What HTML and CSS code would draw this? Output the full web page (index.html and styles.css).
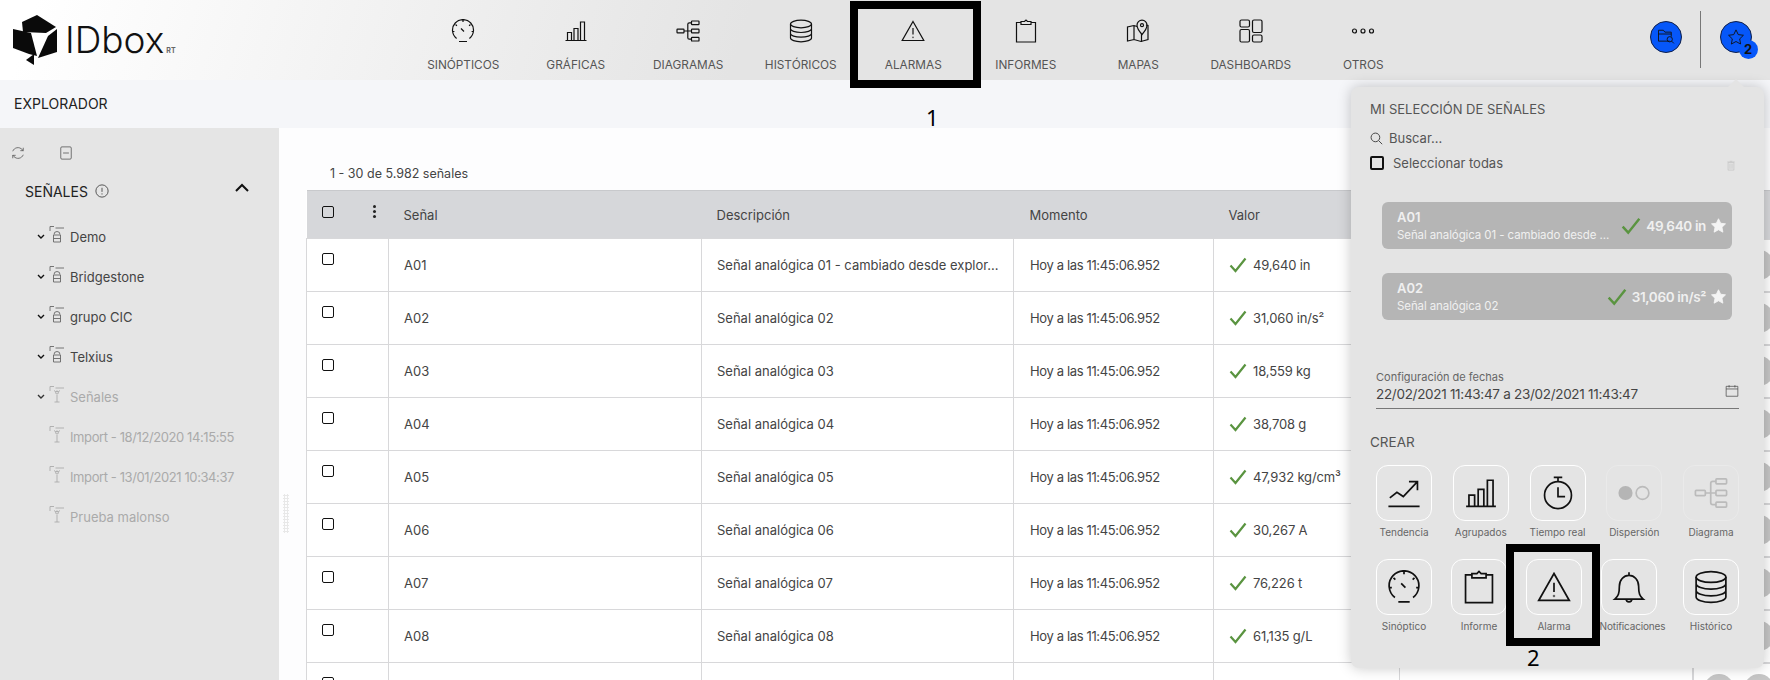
FILE: index.html
```html
<!DOCTYPE html>
<html lang="es">
<head>
    <meta charset="UTF-8">
    <title>IDbox RT - Explorador</title>
    <link rel="stylesheet" href="styles.css">
</head>
<body>

    <svg class="sprites" xmlns="http://www.w3.org/2000/svg">
        <symbol id="i-gauge" viewBox="0 0 24 24">
            <path d="M5.6 19.4A10.5 10.5 0 1 1 18.4 19.4M1.6 12.5h1.8M4.6 5.5l1.3 1.3M12 1.2V3M19.4 5.5l-1.3 1.3M22.4 12.5h-1.8M10 9.5l3 3M8 22.5h8"/>
        </symbol>
        <symbol id="i-bars" viewBox="0 0 24 24">
            <path d="M1.5 21.5h21M3.5 21v-7.500h4V21M10 21V9.500h4V21M16.500 21V3h4v18"/>
        </symbol>
        <symbol id="i-tree" viewBox="0 0 24 24">
            <rect x="1" y="10.200" width="7" height="3.600" rx=".6"/>
            <rect x="15.500" y="2" width="7.500" height="3.600" rx=".6"/>
            <rect x="15.500" y="10.200" width="7.500" height="3.600" rx=".6"/>
            <rect x="15.500" y="18.400" width="7.500" height="3.600" rx=".6"/>
            <path d="M8 12h7.500M15.500 3.800h-2.200a1.500 1.500 0 0 0-1.500 1.500v13.400a1.500 1.500 0 0 0 1.500 1.500h2.200"/>
        </symbol>
        <symbol id="i-db" viewBox="0 0 24 24">
            <ellipse cx="12" cy="5" rx="10.500" ry="3.800"/>
            <path d="M1.500 5v14c0 2.100 4.700 3.800 10.500 3.800s10.500-1.700 10.500-3.800V5M1.500 9.700c0 2.100 4.700 3.800 10.500 3.800s10.500-1.700 10.500-3.800M1.500 14.400c0 2.100 4.700 3.800 10.500 3.800s10.500-1.700 10.500-3.800"/>
        </symbol>
        <symbol id="i-alert" viewBox="0 0 24 24">
            <path d="M12 2.500L22.800 21.500H1.200zM12 9v6.500"/>
            <circle class="dot" cx="12" cy="18.300" r=".9"/>
        </symbol>
        <symbol id="i-clip" viewBox="0 0 24 24">
            <path d="M7 3.500H2.500V23h19V3.500H17M7 5.500V2.500h3.500l1.500-1.500 1.500 1.500H17v3z"/>
        </symbol>
        <symbol id="i-map" viewBox="0 0 24 24">
            <path d="M8 6.500L1.500 8v14l6.500-1.500 7 2 7-2V6.500l-2-.5M8 6.500v14M15.500 15v8M8 6.500l3 1"/>
            <path d="M16 1.200a5 5 0 0 0-5 5c0 3.500 5 9.300 5 9.300s5-5.800 5-9.300a5 5 0 0 0-5-5z"/>
            <circle cx="16" cy="6.200" r="1.500"/>
        </symbol>
        <symbol id="i-dash" viewBox="0 0 24 24">
            <rect x="1" y="1" width="9.500" height="7" rx="1.500"/>
            <rect x="1" y="10.500" width="9.500" height="12.500" rx="1.500"/>
            <rect x="13.500" y="1" width="9.500" height="12.500" rx="1.500"/>
            <rect x="13.500" y="16" width="9.500" height="7" rx="1.500"/>
        </symbol>
        <symbol id="i-dots" viewBox="0 0 24 24">
            <circle cx="3.500" cy="12" r="2"/>
            <circle cx="12" cy="12" r="2"/>
            <circle cx="20.500" cy="12" r="2"/>
        </symbol>
        <symbol id="i-trend" viewBox="0 0 24 24">
            <path d="M2 15.500l5-4 4.500 3L21 4.500M15.500 4H21.500v6M1 21.500h22"/>
        </symbol>
        <symbol id="i-timer" viewBox="0 0 24 24">
            <circle cx="12" cy="13.500" r="9.500"/>
            <path d="M9 1h6M12 1v3M12 8v6.500h5"/>
        </symbol>
        <symbol id="i-scatter" viewBox="0 0 24 24">
            <circle class="dot" cx="6" cy="12" r="5"/>
            <circle cx="18" cy="12" r="4.500"/>
        </symbol>
        <symbol id="i-bell" viewBox="0 0 24 24">
            <path d="M2 20.500c2.500-2 3.200-4 3.200-9 0-4.500 3-7.700 6.800-7.700s6.800 3.200 6.800 7.700c0 5 .7 7 3.200 9zM12 1.500v2.300M10 20.500a2 2 0 0 0 4 0"/>
        </symbol>
        <symbol id="i-star" viewBox="0 0 24 24">
            <path d="M12 2.500l3 6.300 6.900.9-5 4.800 1.300 6.900-6.200-3.400-6.200 3.400 1.300-6.900-5-4.800 6.900-.9z" stroke-linejoin="round"/>
        </symbol>
        <symbol id="i-folder" viewBox="0 0 24 24">
            <path d="M17 17.500H2V3h6.500l2 2.500H19v6M2 8h17"/>
            <circle cx="17" cy="15" r="3.500"/>
            <path d="M19.500 17.500l3 3"/>
        </symbol>
        <symbol id="i-search" viewBox="0 0 24 24">
            <circle cx="10" cy="10" r="8"/>
            <path d="M16 16l6.500 6.500"/>
        </symbol>
        <symbol id="i-trash" viewBox="0 0 24 24">
            <path d="M5 5h14v18H5zM3 3.500h18M9 2h6M9.500 8v12M14.500 8v12"/>
        </symbol>
        <symbol id="i-cal" viewBox="0 0 24 24">
            <path d="M2 4h20v17H2zM2 8.500h20M7 2v4M17 2v4"/>
        </symbol>
        <symbol id="i-refresh" viewBox="0 0 24 24">
            <path d="M3 9a9.500 9.500 0 0 1 16-3l2 2M21 15a9.500 9.500 0 0 1-16 3l-2-2M21 3v5h-5M3 21v-5h5"/>
        </symbol>
        <symbol id="i-minusbox" viewBox="0 0 24 24">
            <rect x="3" y="1.500" width="18" height="21" rx="2"/>
            <path d="M7 12h10"/>
        </symbol>
        <symbol id="i-info" viewBox="0 0 24 24">
            <circle cx="12" cy="12" r="10.500"/>
            <path d="M12 6.500v7M12 16v2"/>
        </symbol>
        <symbol id="i-group" viewBox="0 0 16 18">
            <path d="M1 6V1.500h4M6.500 3H15M5 9.500a3 3 0 0 1 6 0M4.500 10h7v7h-7zM4.500 13.500h7"/>
        </symbol>
        <symbol id="i-signal" viewBox="0 0 16 18">
            <path d="M1 6V1.500h4M6.500 3H15M8 10v7M5.500 17h5M5 5.500a4 4 0 0 0 6 0"/>
            <circle cx="8" cy="7.500" r="1.500"/>
        </symbol>
    </svg>

    <header class="topbar">
        <a class="logo">
            <svg class="logo-mark" viewBox="13 15 44 50">
                <path d="M37 15l19 12-10 6-23-1-1-10z"/>
                <path d="M57 29v23l-19 6 10-22z"/>
                <path d="M13 29l18 4 6 23-8-2-16-6z"/>
                <path d="M34 54v11l-8-5z"/>
            </svg>
            <span class="logo-text">IDbox</span><span class="logo-rt">RT</span>
        </a>
        <nav class="mainnav">
            <a class="nav-item"><svg class="ic"><use href="#i-gauge"/></svg>SINÓPTICOS</a>
            <a class="nav-item"><svg class="ic"><use href="#i-bars"/></svg>GRÁFICAS</a>
            <a class="nav-item"><svg class="ic"><use href="#i-tree"/></svg>DIAGRAMAS</a>
            <a class="nav-item"><svg class="ic"><use href="#i-db"/></svg>HISTÓRICOS</a>
            <a class="nav-item"><svg class="ic"><use href="#i-alert"/></svg>ALARMAS</a>
            <a class="nav-item"><svg class="ic"><use href="#i-clip"/></svg>INFORMES</a>
            <a class="nav-item"><svg class="ic"><use href="#i-map"/></svg>MAPAS</a>
            <a class="nav-item"><svg class="ic"><use href="#i-dash"/></svg>DASHBOARDS</a>
            <a class="nav-item"><svg class="ic"><use href="#i-dots"/></svg>OTROS</a>
        </nav>
        <div class="top-actions">
            <a class="round-btn"><svg class="ic-sm"><use href="#i-folder"/></svg></a>
            <span class="top-divider"></span>
            <a class="round-btn">
                <svg class="ic-sm"><use href="#i-star"/></svg>
                <span class="badge">2</span>
            </a>
        </div>
    </header>

    <div class="titlebar">EXPLORADOR</div>

    <div class="content">
        <aside class="sidebar">
            <div class="side-tools">
                <svg class="tool"><use href="#i-refresh"/></svg>
                <svg class="tool"><use href="#i-minusbox"/></svg>
            </div>
            <div class="side-head">
                <span>SEÑALES</span>
                <svg class="info"><use href="#i-info"/></svg>
                <svg class="chev-up" viewBox="0 0 14 9"><path d="M1 8l6-6 6 6"/></svg>
            </div>
            <ul class="tree">
                <li><svg class="arrow" viewBox="0 0 8 6"><path d="M1 1l3 3 3-3"/></svg><svg class="node"><use href="#i-group"/></svg>Demo</li>
                <li><svg class="arrow" viewBox="0 0 8 6"><path d="M1 1l3 3 3-3"/></svg><svg class="node"><use href="#i-group"/></svg>Bridgestone</li>
                <li><svg class="arrow" viewBox="0 0 8 6"><path d="M1 1l3 3 3-3"/></svg><svg class="node"><use href="#i-group"/></svg>grupo CIC</li>
                <li><svg class="arrow" viewBox="0 0 8 6"><path d="M1 1l3 3 3-3"/></svg><svg class="node"><use href="#i-group"/></svg>Telxius</li>
                <li class="off"><svg class="arrow" viewBox="0 0 8 6"><path d="M1 1l3 3 3-3"/></svg><svg class="node"><use href="#i-signal"/></svg>Señales</li>
                <li class="off leaf nums"><svg class="node"><use href="#i-signal"/></svg>Import - 18/12/2020 14:15:55</li>
                <li class="off leaf nums"><svg class="node"><use href="#i-signal"/></svg>Import - 13/01/2021 10:34:37</li>
                <li class="off leaf"><svg class="node"><use href="#i-signal"/></svg>Prueba malonso</li>
            </ul>
        </aside>

        <div class="grip"></div>

        <main class="main">
            <p class="count">1 - 30 de 5.982 señales</p>
            <table class="signals">
                <colgroup>
                    <col class="c-check"><col class="c-name"><col class="c-desc"><col class="c-time"><col class="c-val"><col class="c-extra"><col class="c-btn">
                </colgroup>
                <thead>
                    <tr>
                        <th class="check-cell"><span class="cb"></span><span class="kebab"></span></th>
                        <th>Señal</th>
                        <th>Descripción</th>
                        <th>Momento</th>
                        <th>Valor</th>
                        <th></th>
                        <th></th>
                    </tr>
                </thead>
                <tbody>
                    <tr><td class="check-cell"><span class="cb"></span></td><td>A01</td><td>Señal analógica 01 - cambiado desde explor...</td><td>Hoy a las 11:45:06.952</td><td><svg class="ok" viewBox="0 0 18 16"><path d="M1.500 8.500l5 5.500L16.500 1.500"/></svg>49,640 in</td><td></td><td class="btn-cell"><span class="row-btn"></span><span class="row-btn"></span></td></tr>
                    <tr><td class="check-cell"><span class="cb"></span></td><td>A02</td><td>Señal analógica 02</td><td>Hoy a las 11:45:06.952</td><td><svg class="ok" viewBox="0 0 18 16"><path d="M1.500 8.500l5 5.500L16.500 1.500"/></svg>31,060 in/s²</td><td></td><td class="btn-cell"><span class="row-btn"></span><span class="row-btn"></span></td></tr>
                    <tr><td class="check-cell"><span class="cb"></span></td><td>A03</td><td>Señal analógica 03</td><td>Hoy a las 11:45:06.952</td><td><svg class="ok" viewBox="0 0 18 16"><path d="M1.500 8.500l5 5.500L16.500 1.500"/></svg>18,559 kg</td><td></td><td class="btn-cell"><span class="row-btn"></span><span class="row-btn"></span></td></tr>
                    <tr><td class="check-cell"><span class="cb"></span></td><td>A04</td><td>Señal analógica 04</td><td>Hoy a las 11:45:06.952</td><td><svg class="ok" viewBox="0 0 18 16"><path d="M1.500 8.500l5 5.500L16.500 1.500"/></svg>38,708 g</td><td></td><td class="btn-cell"><span class="row-btn"></span><span class="row-btn"></span></td></tr>
                    <tr><td class="check-cell"><span class="cb"></span></td><td>A05</td><td>Señal analógica 05</td><td>Hoy a las 11:45:06.952</td><td><svg class="ok" viewBox="0 0 18 16"><path d="M1.500 8.500l5 5.500L16.500 1.500"/></svg>47,932 kg/cm³</td><td></td><td class="btn-cell"><span class="row-btn"></span><span class="row-btn"></span></td></tr>
                    <tr><td class="check-cell"><span class="cb"></span></td><td>A06</td><td>Señal analógica 06</td><td>Hoy a las 11:45:06.952</td><td><svg class="ok" viewBox="0 0 18 16"><path d="M1.500 8.500l5 5.500L16.500 1.500"/></svg>30,267 A</td><td></td><td class="btn-cell"><span class="row-btn"></span><span class="row-btn"></span></td></tr>
                    <tr><td class="check-cell"><span class="cb"></span></td><td>A07</td><td>Señal analógica 07</td><td>Hoy a las 11:45:06.952</td><td><svg class="ok" viewBox="0 0 18 16"><path d="M1.500 8.500l5 5.500L16.500 1.500"/></svg>76,226 t</td><td></td><td class="btn-cell"><span class="row-btn"></span><span class="row-btn"></span></td></tr>
                    <tr><td class="check-cell"><span class="cb"></span></td><td>A08</td><td>Señal analógica 08</td><td>Hoy a las 11:45:06.952</td><td><svg class="ok" viewBox="0 0 18 16"><path d="M1.500 8.500l5 5.500L16.500 1.500"/></svg>61,135 g/L</td><td></td><td class="btn-cell"><span class="row-btn"></span><span class="row-btn"></span></td></tr>
                    <tr><td class="check-cell"><span class="cb"></span></td><td></td><td></td><td></td><td></td><td></td><td class="btn-cell"><span class="row-btn"></span><span class="row-btn"></span></td></tr>
                </tbody>
            </table>
        </main>
    </div>

    <!-- desplegable de seleccion -->
    <section class="panel">
        <h2 class="panel-title">MI SELECCIÓN DE SEÑALES</h2>
        <div class="panel-search"><svg class="search-ic"><use href="#i-search"/></svg>Buscar...</div>
        <div class="panel-all">
            <span class="cb big"></span>Seleccionar todas
            <svg class="trash"><use href="#i-trash"/></svg>
        </div>

        <div class="sel-card">
            <div class="sel-text"><b>A01</b><span>Señal analógica 01 - cambiado desde ...</span></div>
            <svg class="ok big" viewBox="0 0 18 16"><path d="M1.500 8.500l5 5.500L16.500 1.500"/></svg>
            <span class="sel-val">49,640 in</span>
            <svg class="sel-star"><use href="#i-star"/></svg>
        </div>
        <div class="sel-card">
            <div class="sel-text"><b>A02</b><span>Señal analógica 02</span></div>
            <svg class="ok big" viewBox="0 0 18 16"><path d="M1.500 8.500l5 5.500L16.500 1.500"/></svg>
            <span class="sel-val">31,060 in/s²</span>
            <svg class="sel-star"><use href="#i-star"/></svg>
        </div>

        <div class="dates">
            <label>Configuración de fechas</label>
            <div class="dates-val">22/02/2021 11:43:47 a 23/02/2021 11:43:47<svg class="cal"><use href="#i-cal"/></svg></div>
        </div>

        <h3 class="create-title">CREAR</h3>
        <div class="tiles">
            <a class="tile"><span class="tile-box"><svg><use href="#i-trend"/></svg></span>Tendencia</a>
            <a class="tile"><span class="tile-box"><svg><use href="#i-bars"/></svg></span>Agrupados</a>
            <a class="tile"><span class="tile-box"><svg><use href="#i-timer"/></svg></span>Tiempo real</a>
            <a class="tile off"><span class="tile-box"><svg><use href="#i-scatter"/></svg></span>Dispersión</a>
            <a class="tile off"><span class="tile-box"><svg><use href="#i-tree"/></svg></span>Diagrama</a>
        </div>
        <div class="tiles second">
            <a class="tile"><span class="tile-box"><svg><use href="#i-gauge"/></svg></span>Sinóptico</a>
            <a class="tile"><span class="tile-box"><svg><use href="#i-clip"/></svg></span>Informe</a>
            <a class="tile"><span class="tile-box"><svg><use href="#i-alert"/></svg></span>Alarma</a>
            <a class="tile"><span class="tile-box"><svg><use href="#i-bell"/></svg></span><span class="tile-wide">Notificaciones</span></a>
            <a class="tile last"><span class="tile-box"><svg><use href="#i-db"/></svg></span>Histórico</a>
        </div>
    </section>
    <span class="panel-caret"></span>

    <!-- marcas del manual -->
    <div class="mark mark-one"></div>
    <span class="mark-num num-one">1</span>
    <div class="mark mark-two"></div>
    <span class="mark-num num-two">2</span>

</body>
</html>
```

FILE: styles.css
```css
* {
    box-sizing: border-box;
}
html, body {
    height: 680px;
    overflow: hidden;
}
body {
    margin: 0;
    position: relative;
    font-family: Inter, "Open Sans", sans-serif;
    font-size: 13px;
    color: #444;
    background-color: #fdfdfe;
}
.sprites {
    display: none;
}
svg {
    fill: none;
    stroke: #111;
    stroke-width: 1.2;
    overflow: visible;
}
.dot {
    fill: currentColor;
    stroke: none;
}

/* cabecera */
.topbar {
    height: 80px;
    display: flex;
    background: linear-gradient(108deg, #fff 2%, #e4e4e4 42%);
}
.logo {
    width: 407px;
    padding: 15px 0 0 13px;
    display: flex;
    align-items: flex-start;
    color: #111;
}
.logo-mark {
    width: 44px;
    height: 50px;
    fill: #0a0a0a;
    stroke: none;
}
.logo-text {
    margin: 2px 0 0 8px;
    font-size: 37px;
    line-height: 46px;
    font-weight: 300;
}
.logo-rt {
    margin: 31px 0 0 2px;
    font-size: 7px;
    font-weight: 700;
    color: #666;
}
.mainnav {
    display: flex;
}
.nav-item {
    width: 112.5px;
    display: flex;
    flex-direction: column;
    align-items: center;
    font-size: 11.8px;
    color: #555;
    padding-top: 19px;
}
.ic {
    width: 24px;
    height: 24px;
    margin-bottom: 15px;
}
.top-actions {
    flex: 1;
    display: flex;
    align-items: flex-start;
    padding: 21px 0 0 230px;
}
.round-btn {
    position: relative;
    width: 32px;
    height: 32px;
    border-radius: 50%;
    background-color: #0657f9;
    border: 1px solid #10204a;
    display: flex;
    align-items: center;
    justify-content: center;
}
.ic-sm {
    width: 18px;
    height: 18px;
}
.top-divider {
    width: 1px;
    height: 57px;
    margin: -10px 19px 0 18px;
    background-color: #777;
}
.badge {
    position: absolute;
    right: -7px;
    bottom: -7px;
    width: 19px;
    height: 19px;
    border-radius: 50%;
    background-color: #0657f9;
    color: #111;
    font-weight: 700;
    font-size: 13px;
    line-height: 19px;
    text-align: center;
}

.titlebar {
    height: 48px;
    padding-left: 14px;
    line-height: 48px;
    font-size: 14px;
    color: #222;
    background-color: #f5f6f9;
}

.content {
    display: flex;
    height: 552px;
    overflow: hidden;
}

/* arbol lateral */
.sidebar {
    width: 279px;
    flex: none;
    background-color: #e5e5e5;
    padding: 17px 0 0 11px;
}
.side-tools {
    display: flex;
    gap: 34px;
    height: 16px;
}
.tool {
    width: 14px;
    height: 16px;
    stroke: #444;
}
.side-head {
    display: flex;
    align-items: center;
    margin: 18px 0 0 14px;
    height: 24px;
    font-size: 14px;
    color: #222;
}
.info {
    width: 14px;
    height: 14px;
    margin-left: 7px;
    stroke: #444;
    stroke-width: 1.5;
}
.chev-up {
    width: 14px;
    height: 9px;
    margin: -8px 0 0 126px;
    stroke-width: 2;
}
.tree {
    list-style: none;
    margin: 14px 0 0;
    padding: 0 0 0 26px;
}
.tree li {
    height: 40px;
    display: flex;
    align-items: center;
    color: #444;
    white-space: nowrap;
}
.tree li.off {
    color: #aaa;
}
.tree li.leaf {
    padding-left: 12px;
}
.tree li.nums {
    letter-spacing: -0.4px;
}
.arrow {
    width: 8px;
    height: 6px;
    margin-right: 4px;
    stroke-width: 1.4;
}
.node {
    width: 16px;
    height: 18px;
    margin: -7px 5px 0 0;
    stroke: #666;
    stroke-width: .9;
}
.off .node {
    stroke: #aaa;
}
.off .arrow {
    stroke: #333;
}

.grip {
    width: 27px;
    flex: none;
    background-image: radial-gradient(#e8e8e8 1.2px, transparent 1.3px);
    background-size: 3px 3px;
    background-repeat: repeat;
    background-position: 4px 366px;
    background-clip: content-box;
    padding: 366px 17px 147px 4px;
}

/* tabla */
.main {
    flex: 1;
    min-width: 0;
    overflow: hidden;
}
.count {
    margin: 0;
    padding: 37px 0 0 24px;
    height: 62px;
    line-height: 17px;
    font-size: 12.5px;
}
.signals {
    width: 1464px;
    table-layout: fixed;
    border-collapse: collapse;
    background-color: #fff;
}
.c-check { width: 82px; }
.c-name { width: 313px; }
.c-desc { width: 312px; }
.c-time { width: 200px; }
.c-val { width: 186px; }
.c-extra { width: 293px; }
.c-btn { width: 78px; }
.signals th {
    height: 48px;
    padding: 0 15px;
    text-align: left;
    font-weight: 400;
    background-color: #d6d7da;
    border-top: 1px solid #c8c9cc;
}
.signals td {
    height: 53px;
    padding: 0 5px 0 15px;
    border: 1px solid #d8d8da;
    white-space: nowrap;
    overflow: hidden;
}
.signals th:nth-child(4),
.signals td:nth-child(4) {
    padding-left: 16px;
}
.signals td:nth-child(4) {
    letter-spacing: -0.36px;
}
.signals td:nth-child(5) {
    letter-spacing: -0.15px;
}
.signals th.check-cell,
.signals td.check-cell {
    padding: 0 0 0 15px;
    vertical-align: top;
}
.signals td.check-cell {
    padding-top: 14px;
}
.signals th.check-cell {
    padding-top: 15px;
}
.cb {
    display: inline-block;
    width: 12px;
    height: 12px;
    border: 1.5px solid #111;
    border-radius: 2px;
    vertical-align: top;
}
.cb.big {
    width: 14px;
    height: 14px;
    border-width: 2px;
    margin-right: 9px;
}
.kebab {
    display: inline-block;
    width: 3px;
    height: 3px;
    margin: -1px 0 0 39px;
    border-radius: 50%;
    background-color: #222;
    box-shadow: 0 5px #222, 0 10px #222;
    vertical-align: top;
}
.ok {
    width: 18px;
    height: 16px;
    margin-right: 6px;
    stroke: #5a9440;
    stroke-width: 2.2;
    vertical-align: -3px;
}
.signals td.btn-cell {
    padding: 0 0 0 10px;
    overflow: visible;
}
.btn-cell {
    display: flex;
    gap: 10px;
    align-items: center;
    width: 90px;
}
.row-btn {
    width: 30px;
    height: 30px;
    flex: none;
    border-radius: 50%;
    background-color: #c6c6c6;
}

/* desplegable */
.panel {
    position: absolute;
    left: 1351px;
    top: 87px;
    width: 413px;
    height: 581px;
    padding: 13px 25px 0 19px;
    background-color: #e4e4e4;
    border-radius: 8px;
    box-shadow: 0 0 14px rgba(0, 0, 0, 0.22);
}
.panel-caret {
    position: absolute;
    left: 1727px;
    top: 79px;
    border: 9px solid transparent;
    border-top: 0;
    border-bottom-color: #e4e4e4;
}
.panel-title {
    margin: 0;
    font-size: 13px;
    line-height: 18px;
    font-weight: 400;
    color: #555;
}
.panel-search {
    display: flex;
    align-items: center;
    height: 18px;
    margin-top: 11px;
    color: #555;
}
.search-ic {
    width: 13px;
    height: 13px;
    margin-right: 6px;
    stroke: #444;
    stroke-width: 1.8;
}
.panel-all {
    display: flex;
    align-items: center;
    height: 18px;
    margin-top: 7px;
    color: #555;
}
.trash {
    width: 10px;
    height: 13px;
    margin: 4px 3px 0 auto;
    stroke: #c8c8c8;
    stroke-width: 2;
}
.sel-card {
    display: flex;
    align-items: center;
    width: 350px;
    height: 47px;
    margin: 30px 0 24px 12px;
    padding: 0 5px 0 15px;
    color: #f0f0f0;
    background-color: #b5b5b5;
    border-radius: 6px;
}
.sel-card + .sel-card {
    margin-top: 0;
}
.sel-text {
    flex: 1;
    min-width: 0;
    margin-right: 5px;
    display: flex;
    flex-direction: column;
    gap: 3px;
    font-size: 11.5px;
}
.sel-text b {
    font-size: 13px;
    font-weight: 600;
}
.sel-text span {
    letter-spacing: -0.1px;
    white-space: nowrap;
    overflow: hidden;
}
.ok.big {
    width: 20px;
    height: 20px;
    margin: 0 5px 0 0;
    flex: none;
    stroke-width: 2.2;
}
.sel-val {
    font-size: 13.5px;
    font-weight: 600;
    letter-spacing: -0.35px;
    white-space: nowrap;
}
.sel-star {
    width: 17px;
    height: 17px;
    margin-left: 4px;
    flex: none;
    fill: #f4f4f4;
    stroke: #f4f4f4;
}
.dates {
    margin: 0 0 0 6px;
    padding-top: 26px;
    width: 363px;
}
.dates label {
    display: block;
    font-size: 11px;
    line-height: 14px;
    color: #666;
}
.dates-val {
    display: flex;
    justify-content: space-between;
    height: 25px;
    line-height: 20px;
    font-size: 13.5px;
    letter-spacing: -0.3px;
    border-bottom: 1px solid #777;
}
.cal {
    width: 14px;
    height: 14px;
    stroke: #444;
}
.create-title {
    margin: 24px 0 0;
    font-size: 13.5px;
    line-height: 18px;
    font-weight: 400;
    color: #555;
}
.tiles {
    display: flex;
    justify-content: space-between;
    width: 363px;
    margin: 14px 0 0 6px;
}
.tiles.second {
    justify-content: flex-start;
    gap: 19px;
    margin-top: 20px;
}
.tile {
    width: 56px;
    display: flex;
    flex-direction: column;
    align-items: center;
    font-size: 10px;
    line-height: 14px;
    color: #666;
    white-space: nowrap;
}
.tile.last {
    margin-left: auto;
}
.tile-wide {
    margin-left: 7px;
    letter-spacing: -0.15px;
}
.tile-box {
    width: 56px;
    height: 56px;
    margin-bottom: 4px;
    display: flex;
    align-items: center;
    justify-content: center;
    border: 1px solid #fff;
    border-radius: 12px;
}
.tile-box svg {
    width: 34px;
    height: 34px;
}
.tile.off .tile-box {
    border-color: #eaeaea;
}
.tile.off svg {
    stroke: #bbb;
    color: #b5b5b5;
}

/* marcas */
.mark {
    position: absolute;
    border: 8px solid #000;
}
.mark-one {
    left: 850px;
    top: 1px;
    width: 131px;
    height: 87px;
}
.mark-two {
    left: 1506px;
    top: 544px;
    width: 94px;
    height: 102px;
}
.mark-num {
    position: absolute;
    font-family: "Noto Sans", sans-serif;
    font-size: 22px;
    line-height: 26px;
    color: #000;
}
.num-one {
    left: 926px;
    top: 104px;
}
.num-two {
    left: 1527px;
    top: 644px;
}
```
